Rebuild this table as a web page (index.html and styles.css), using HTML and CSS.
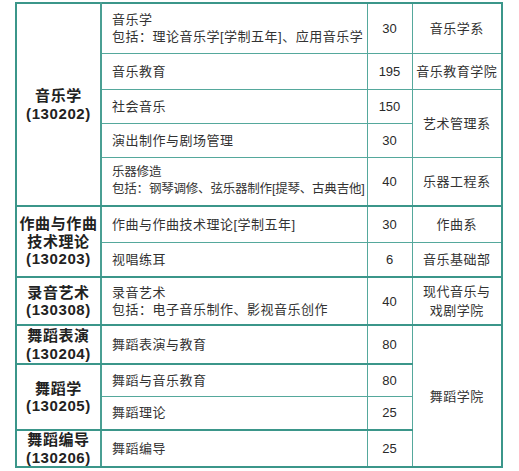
FILE: index.html
```html
<!DOCTYPE html>
<html lang="zh">
<head>
<meta charset="utf-8">
<link rel="stylesheet" href="styles.css">
</head>
<body>
<div class="page">
<table class="plan">
  <colgroup>
    <col class="c-major"><col class="c-dir"><col class="c-num"><col class="c-dept">
  </colgroup>
  <tbody>
    <tr class="h50">
      <td class="major" rowspan="5">音乐学<br>(130202)</td>
      <td class="dir">音乐学<br>包括：理论音乐学[学制五年]、应用音乐学</td>
      <td class="num">30</td>
      <td class="dept">音乐学系</td>
    </tr>
    <tr class="h36">
      <td class="dir">音乐教育</td>
      <td class="num">195</td>
      <td class="dept">音乐教育学院</td>
    </tr>
    <tr class="h34">
      <td class="dir">社会音乐</td>
      <td class="num">150</td>
      <td class="dept" rowspan="2">艺术管理系</td>
    </tr>
    <tr class="h34">
      <td class="dir">演出制作与剧场管理</td>
      <td class="num">30</td>
    </tr>
    <tr class="h49 grp">
      <td class="dir tight">乐器修造<br>包括：钢琴调修、弦乐器制作[提琴、古典吉他]</td>
      <td class="num">40</td>
      <td class="dept">乐器工程系</td>
    </tr>
    <tr class="h36">
      <td class="major" rowspan="2">作曲与作曲<br>技术理论<br>(130203)</td>
      <td class="dir">作曲与作曲技术理论[学制五年]</td>
      <td class="num">30</td>
      <td class="dept">作曲系</td>
    </tr>
    <tr class="h35 grp">
      <td class="dir">视唱练耳</td>
      <td class="num">6</td>
      <td class="dept">音乐基础部</td>
    </tr>
    <tr class="h48 grp">
      <td class="major">录音艺术<br>(130308)</td>
      <td class="dir">录音艺术<br>包括：电子音乐制作、影视音乐创作</td>
      <td class="num">40</td>
      <td class="dept">现代音乐与<br>戏剧学院</td>
    </tr>
    <tr class="h39 grp">
      <td class="major">舞蹈表演<br>(130204)</td>
      <td class="dir">舞蹈表演与教育</td>
      <td class="num">80</td>
      <td class="dept" rowspan="4">舞蹈学院</td>
    </tr>
    <tr class="h32">
      <td class="major" rowspan="2">舞蹈学<br>(130205)</td>
      <td class="dir">舞蹈与音乐教育</td>
      <td class="num">80</td>
    </tr>
    <tr class="h34 grp">
      <td class="dir">舞蹈理论</td>
      <td class="num">25</td>
    </tr>
    <tr class="h36">
      <td class="major">舞蹈编导<br>(130206)</td>
      <td class="dir">舞蹈编导</td>
      <td class="num">25</td>
    </tr>
  </tbody>
</table>
</div>
</body>
</html>
```

FILE: styles.css
```css
html, body {
  margin: 0;
  padding: 0;
  background: #ffffff;
}

.page {
  padding: 2px 0 0 15px;
}

.plan {
  border-collapse: collapse;
  table-layout: fixed;
  width: 486px;
  border: 2px solid #3b968a;
  font-family: "Liberation Sans", "Noto Sans CJK SC", sans-serif;
}

.c-major { width: 85px; }
.c-dir { width: 266px; }
.c-num { width: 45px; }
.c-dept { width: 90px; }

.plan td {
  border: 1px solid #55a89c;
  padding: 0;
  vertical-align: middle;
  line-height: 17px;
  color: #333333;
}

.plan tr.grp td {
  border-bottom: 2px solid #3b968a;
}

.plan td.major {
  border-bottom: 2px solid #3b968a;
  border-right: 2px solid #4a9f93;
  text-align: center;
  font-weight: bold;
  font-size: 15px;
  letter-spacing: 0.6px;
  line-height: 17.5px;
  color: #222222;
}

.plan td.dir {
  font-size: 13px;
  letter-spacing: 0.5px;
  padding-left: 10px;
  text-align: left;
  white-space: nowrap;
  overflow: hidden;
}

.plan td.dir.tight {
  font-size: 12.5px;
  letter-spacing: -0.2px;
}

.plan td.num {
  font-size: 13px;
  text-align: center;
  color: #2a2a2a;
}

.plan td.dept {
  font-size: 13px;
  letter-spacing: 0.5px;
  text-align: center;
  line-height: 19px;
}

.h50 { height: 50px; }
.h49 { height: 49px; }
.h48 { height: 48px; }
.h39 { height: 39px; }
.h36 { height: 36px; }
.h35 { height: 35px; }
.h34 { height: 34px; }
.h32 { height: 32px; }
```
